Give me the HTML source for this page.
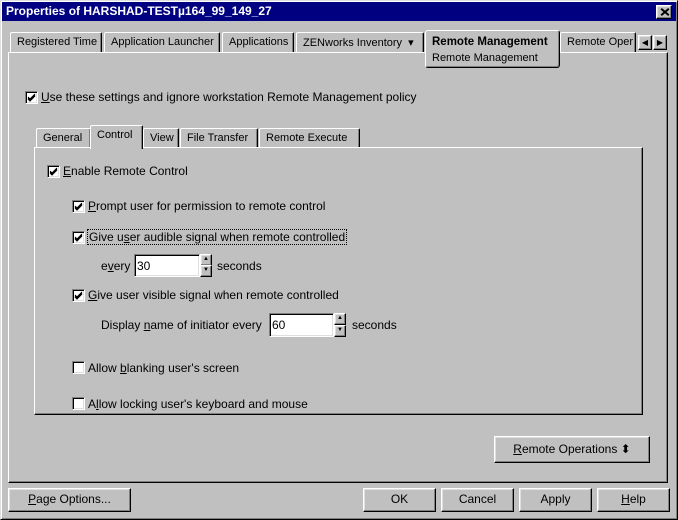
<!DOCTYPE html><html><head><style>
*{margin:0;padding:0;box-sizing:border-box}
body{width:678px;height:520px;background:#c0c0c0;font:12px "Liberation Sans",sans-serif;color:#000;position:relative;overflow:hidden}
.a{position:absolute}
.raised{border:1px solid;border-color:#fff #000 #000 #fff;box-shadow:inset -1px -1px #808080,inset 1px 1px #dfdfdf}
.sunk{border:1px solid;border-color:#808080 #fff #fff #808080;box-shadow:inset 1px 1px #000,inset -1px -1px #dfdfdf}
.cb{position:absolute;width:13px;height:13px;background:#fff;border:1px solid;border-color:#808080 #fff #fff #808080;box-shadow:inset 1px 1px #000,inset -1px -1px #dfdfdf}
.cb svg{position:absolute;left:1px;top:1px}
.t{position:absolute;white-space:nowrap;line-height:14px}
.tab{position:absolute;height:20px;border:1px solid;border-bottom:none;border-color:#fff #000 #000 #fff;border-radius:2px 2px 0 0;padding:3px 6px 0;white-space:nowrap;box-shadow:inset -1px 0 #808080;overflow:hidden;font-size:11px}
.btn{position:absolute;height:24px;text-align:center;line-height:21px}
u{text-decoration:underline}
.x{position:absolute;left:3px;top:5px;width:10px;height:2px;background:#000}
</style></head><body>
<div class="a" style="left:0;top:0;width:678px;height:520px;border:1px solid;border-color:#dfdfdf #000 #000 #dfdfdf;box-shadow:inset 1px 1px #fff,inset -1px -1px #808080"></div>
<div class="a" style="left:2px;top:2px;width:674px;height:19px;background:#000080"></div>
<div class="t" style="left:6px;top:4px;color:#fff;font-weight:bold;font-size:12px">Properties of HARSHAD-TESTµ164_99_149_27</div>
<div class="a raised" style="left:656px;top:5px;width:16px;height:14px;background:#c0c0c0"><div class="x" style="transform:rotate(40deg)"></div><div class="x" style="transform:rotate(-40deg)"></div></div>

<div class="a" style="left:8px;top:52px;width:660px;height:431px;border:1px solid;border-color:#fff #000 #000 #fff;box-shadow:inset -1px -1px #808080"></div>
<div class="tab" style="left:10px;top:32px;width:92px">Registered Time</div>
<div class="tab" style="left:104px;top:32px;width:116px">Application Launcher</div>
<div class="tab" style="left:222px;top:32px;width:72px">Applications</div>
<div class="tab" style="left:296px;top:32px;width:128px">ZENworks Inventory &nbsp;▾</div>
<div class="tab" style="left:560px;top:32px;width:76px">Remote Oper</div>
<div class="a raised" style="left:638px;top:35px;width:14px;height:15px;font-size:8px;text-align:center;line-height:13px">◀</div>
<div class="a raised" style="left:653px;top:35px;width:14px;height:15px;font-size:8px;text-align:center;line-height:13px">▶</div>
<div class="a" style="left:425px;top:30px;width:135px;height:38px;background:#c0c0c0;border:1px solid;border-color:#fff #000 #000 #fff;border-radius:3px;box-shadow:inset -1px -1px #808080"></div>
<div class="t" style="left:432px;top:35px;font-weight:bold;font-size:11.5px">Remote Management</div>
<div class="t" style="left:432px;top:51px;font-size:11px">Remote Management</div>

<div class="cb" style="left:25px;top:91px"><svg width="9" height="9"><path d="M1 4l2 2 5-5M1 5l2 2 5-5M1 6l2 2 5-5" stroke="#000" fill="none"/></svg></div>
<div class="t" style="left:41px;top:90px"><u>U</u>se these settings and ignore workstation Remote Management policy</div>

<div class="a" style="left:34px;top:147px;width:609px;height:268px;border:1px solid;border-color:#fff #000 #000 #fff;box-shadow:inset -1px -1px #808080"></div>
<div class="tab" style="left:36px;top:128px;width:55px;height:19px">General</div>
<div class="tab" style="left:143px;top:128px;width:36px;height:19px">View</div>
<div class="tab" style="left:180px;top:128px;width:78px;height:19px">File Transfer</div>
<div class="tab" style="left:259px;top:128px;width:101px;height:19px">Remote Execute</div>
<div class="tab" style="left:90px;top:125px;width:53px;height:24px;background:#c0c0c0;padding-top:3px">Control</div>

<div class="cb" style="left:47px;top:165px"><svg width="9" height="9"><path d="M1 4l2 2 5-5M1 5l2 2 5-5M1 6l2 2 5-5" stroke="#000" fill="none"/></svg></div>
<div class="t" style="left:63px;top:164px"><u>E</u>nable Remote Control</div>
<div class="cb" style="left:72px;top:200px"><svg width="9" height="9"><path d="M1 4l2 2 5-5M1 5l2 2 5-5M1 6l2 2 5-5" stroke="#000" fill="none"/></svg></div>
<div class="t" style="left:88px;top:199px"><u>P</u>rompt user for permission to remote control</div>
<div class="cb" style="left:72px;top:231px"><svg width="9" height="9"><path d="M1 4l2 2 5-5M1 5l2 2 5-5M1 6l2 2 5-5" stroke="#000" fill="none"/></svg></div>
<div class="t" style="left:87px;top:229px;border:1px dotted #000;padding:0 1px">Give u<u>s</u>er audible signal when remote controlled</div>
<div class="t" style="left:101px;top:259px">e<u>v</u>ery</div>
<div class="a sunk" style="left:134px;top:254px;width:66px;height:23px;background:#fff"></div>
<div class="t" style="left:137px;top:259px">30</div>
<div class="a raised" style="left:200px;top:254px;width:12px;height:12px;font-size:6px;text-align:center;line-height:9px">▲</div>
<div class="a raised" style="left:200px;top:265px;width:12px;height:12px;font-size:6px;text-align:center;line-height:9px">▼</div>
<div class="t" style="left:217px;top:259px">seconds</div>

<div class="cb" style="left:72px;top:289px"><svg width="9" height="9"><path d="M1 4l2 2 5-5M1 5l2 2 5-5M1 6l2 2 5-5" stroke="#000" fill="none"/></svg></div>
<div class="t" style="left:88px;top:288px"><u>G</u>ive user visible signal when remote controlled</div>
<div class="t" style="left:101px;top:318px">Display <u>n</u>ame of initiator every</div>
<div class="a sunk" style="left:269px;top:313px;width:65px;height:24px;background:#fff"></div>
<div class="t" style="left:272px;top:318px">60</div>
<div class="a raised" style="left:334px;top:313px;width:12px;height:12px;font-size:6px;text-align:center;line-height:9px">▲</div>
<div class="a raised" style="left:334px;top:325px;width:12px;height:12px;font-size:6px;text-align:center;line-height:9px">▼</div>
<div class="t" style="left:352px;top:318px">seconds</div>

<div class="cb" style="left:72px;top:361px"></div>
<div class="t" style="left:88px;top:361px">Allow <u>b</u>lanking user's screen</div>
<div class="cb" style="left:72px;top:397px"></div>
<div class="t" style="left:88px;top:397px">A<u>l</u>low locking user's keyboard and mouse</div>

<div class="btn raised" style="left:494px;top:436px;width:156px;height:27px;line-height:24px"><u>R</u>emote Operations ⬍</div>

<div class="btn raised" style="left:8px;top:488px;width:123px"><u>P</u>age Options...</div>
<div class="btn raised" style="left:363px;top:488px;width:73px">OK</div>
<div class="btn raised" style="left:441px;top:488px;width:73px">Cancel</div>
<div class="btn raised" style="left:519px;top:488px;width:73px">Apply</div>
<div class="btn raised" style="left:597px;top:488px;width:73px"><u>H</u>elp</div>
</body></html>
